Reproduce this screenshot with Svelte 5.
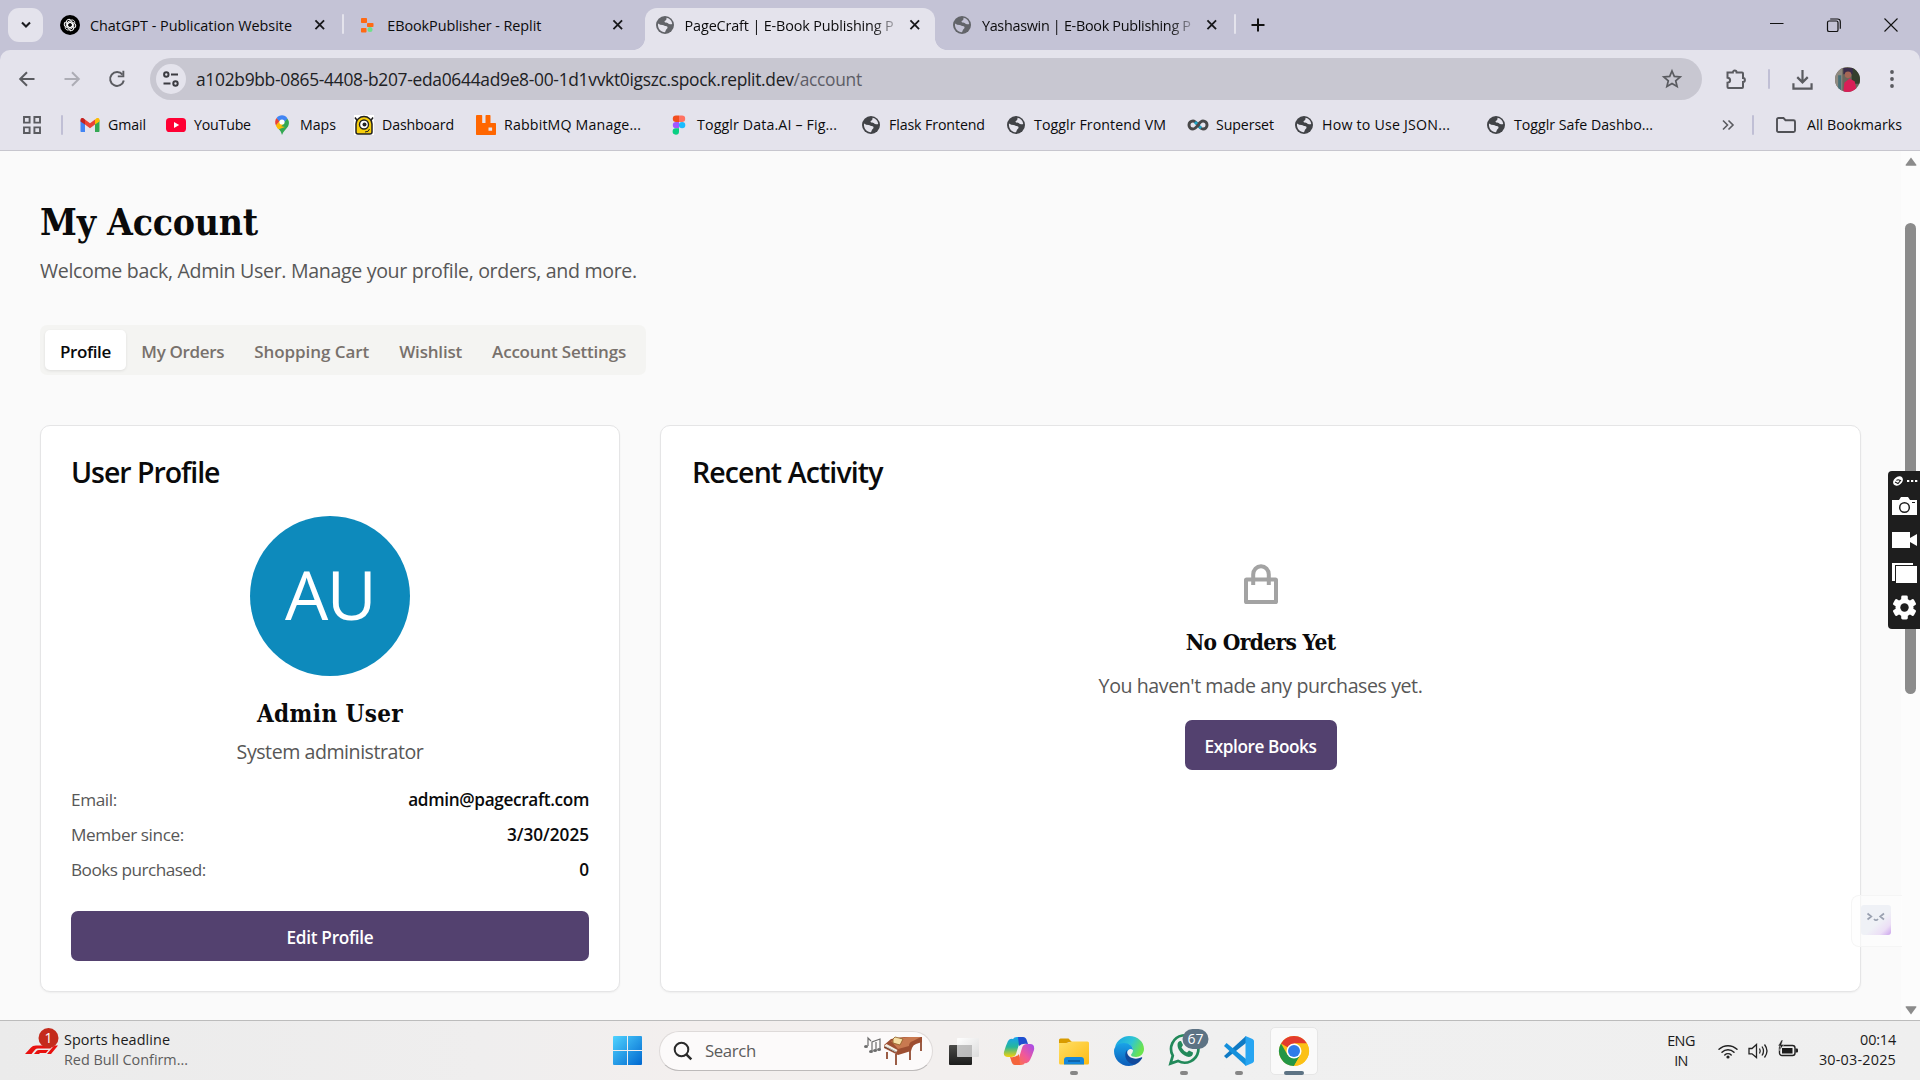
<script>
  // Tightens or loosens the tracking of a label so that it fills the given width.
  function fit(node, width) {
    const natural = node.getBoundingClientRect().width;
    const count = [...node.textContent].length;
    if (natural > 0 && count > 1) {
      node.style.letterSpacing = `${((width - natural) / (count - 0.5)).toFixed(3)}px`;
    }
  }

  const tabs = [
    { icon: 'gpt', title: 'ChatGPT - Publication Website', w: 202, sep: true },
    { icon: 'replit', title: 'EBookPublisher - Replit', w: 154 },
    { icon: 'globe', title: 'PageCraft | E-Book Publishing P', w: 209, active: true, fade: true },
    { icon: 'globe', title: 'Yashaswin | E-Book Publishing P', w: 209, fade: true, sep: true },
  ];

  const bookmarks = [
    { icon: 'gmail', label: 'Gmail', w: 38 },
    { icon: 'youtube', label: 'YouTube', w: 57 },
    { icon: 'maps', label: 'Maps', w: 36 },
    { icon: 'dash', label: 'Dashboard', w: 72 },
    { icon: 'rabbit', label: 'RabbitMQ Manage...', w: 137 },
    { icon: 'figma', label: 'Togglr Data.AI – Fig...', w: 140 },
    { icon: 'globe', label: 'Flask Frontend', w: 96 },
    { icon: 'globe', label: 'Togglr Frontend VM', w: 132 },
    { icon: 'superset', label: 'Superset', w: 58 },
    { icon: 'globe', label: 'How to Use JSON...', w: 128 },
    { icon: 'globe', label: 'Togglr Safe Dashbo...', w: 139 },
  ];

  const sections = [
    { label: 'Profile', w: 51, active: true },
    { label: 'My Orders', w: 83 },
    { label: 'Shopping Cart', w: 115 },
    { label: 'Wishlist', w: 63 },
    { label: 'Account Settings', w: 134 },
  ];

  const details = [
    { label: 'Email:', lw: 46, value: 'admin@pagecraft.com', vw: 181 },
    { label: 'Member since:', lw: 113, value: '3/30/2025', vw: 82 },
    { label: 'Books purchased:', lw: 135, value: '0', vw: 9 },
  ];
</script>

{#snippet icon(name)}
  {#if name === 'gpt'}
    <svg class="i20" viewBox="0 0 20 20"><circle cx="10" cy="10" r="10" fill="#000" /><g fill="none" stroke="#fff" stroke-width="1">{#each [0, 60, 120, 180, 240, 300] as a}<path transform="rotate({a} 10 10)" d="M10 7.2 12.4 8.6V12.9L9.2 14.7A2.7 2.7 0 0 1 5.2 12.2" />{/each}</g></svg>
  {:else if name === 'replit'}
    <svg class="i20" viewBox="0 0 20 20"><rect x="4" y="3" width="6" height="5" rx=".8" fill="#ff6a13" /><rect x="10" y="8" width="6.5" height="4" rx=".8" fill="#ff6a13" /><rect x="4" y="13" width="5.500" height="4.500" rx=".8" fill="#ff6a13" /><circle cx="13" cy="14.500" r="2.500" fill="#6fe08a" /></svg>
  {:else if name === 'globe'}
    <svg class="i20" viewBox="0 0 20 20"><circle cx="10" cy="10" r="9" fill="currentColor" /><path class="land" d="M11.500 2.800C14.800 3.500 17 6 17.200 9c-1 .5-2.200.3-3 .1-.8-.2-.9-1-1.600-1.200-1-.3-1.800 0-2.700-.6-.8-.7-.2-1.700.7-1.900.8-.2.9-1.200.9-2.600ZM3 8.500c1.500 1 3 1.500 4.500 1.500 1.500.1 2 1 3.200 1.100 1.200.2 2 .6 1.800 1.600-.2 1.200-1.300 1.400-1.700 2.500-.2.700-.4 1.400-.9 2C5.900 17 2.400 13.600 3 8.500Z" /></svg>
  {:else if name === 'gmail'}
    <svg class="i20" viewBox="0 0 20 20"><path d="M.5 5v11c0 .6.4 1 1 1h3.500V8Z" fill="#4285f4" /><path d="M15 8v9h3.500c.6 0 1-.4 1-1V5Z" fill="#34a853" /><path d="M5 4.500 10 8.300l5-3.800v5L10 13.300 5 9.500Z" fill="#ea4335" /><path d="M.5 5c0-2 2-2.500 3.300-1.500L5 4.500v5L.5 6.500Z" fill="#c5221f" /><path d="M19.500 5c0-2-2-2.500-3.300-1.500L15 4.500v5l4.500-3Z" fill="#fbbc04" /></svg>
  {:else if name === 'youtube'}
    <svg class="i20" viewBox="0 0 20 20"><rect y="3" width="20" height="14" rx="3.600" fill="#ff0033" /><path d="m8 7 5.200 3L8 13Z" fill="#fff" /></svg>
  {:else if name === 'maps'}
    <svg class="i20" viewBox="0 0 20 20"><path d="M10 20c-.8-3-2-4.300-3.600-6.400L14.800 3.600C17 5 17.800 8.500 16 11.500c-2 3.200-4.700 4.500-6 8.500Z" fill="#34a853" /><path d="M3.800 10 13 12 6.800 14.200C5.500 12.800 4.300 11.500 3.800 10Z" fill="#fbbc04" /><path d="M4.600 3 8 6l-4 4.600C2.600 8 3 4.800 4.600 3Z" fill="#ea4335" /><path d="M4.600 3C7-.5 13-1 15.500 3.600L10.500 9 7 6Z" fill="#4285f4" /><path d="m4 10.600 5-6 2 5-4.800 4.600Z" fill="#fbbc04" /><circle cx="10" cy="7" r="2.600" fill="#fff" /></svg>
  {:else if name === 'dash'}
    <svg class="i20" viewBox="0 0 20 20"><path fill="#fff" d="M0 0h20v20H0z" /><path d="M1 2.500 3.500 6M19 2.500 16.500 6" stroke="#222" stroke-width="1.500" /><path d="M2 17V9a8 7.500 0 0 1 16 0v8q0 2-2 2H4q-2 0-2-2Z" fill="#f8cf0d" stroke="#222" stroke-width="1.500" /><circle cx="10" cy="9.500" r="4.500" fill="#fff" stroke="#222" stroke-width="1.400" /><circle cx="10.500" cy="9.500" r="2" fill="#222" /><path d="M11 17q4 0 4.500-3" fill="none" stroke="#222" /></svg>
  {:else if name === 'rabbit'}
    <svg class="i20" viewBox="0 0 20 20"><path d="M1 0h4.500q.7 0 .7.700V8h3.300V.7q0-.7.700-.7h3.600q.7 0 .7.700V8H19.300q.7 0 .7.700V19.300q0 .7-.7.700H.7q-.7 0-.7-.7V.7Q0 0 1 0ZM12.500 12.500v3.300h3.600v-3.300Z" fill="#f60" fill-rule="evenodd" /></svg>
  {:else if name === 'figma'}
    <svg class="i20" viewBox="0 0 20 20"><path d="M10 .5H7a3.200 3.200 0 0 0 0 6.400h3Z" fill="#f24e1e" /><path d="M10 .5h3a3.200 3.200 0 0 1 0 6.400h-3Z" fill="#ff7262" /><path d="M10 6.900H7a3.200 3.200 0 0 0 0 6.400h3Z" fill="#a259ff" /><circle cx="13.100" cy="10.100" r="3.200" fill="#1abcfe" /><path d="M10 13.300H7a3.200 3.200 0 1 0 3 3.200Z" fill="#0acf83" /></svg>
  {:else if name === 'superset'}
    <svg class="i20" viewBox="0 0 20 20"><path d="M10 10C8 7.200 6.500 6 5 6a4 4 0 0 0 0 8c1.500 0 3-1.200 5-4s3.500-4 5-4a4 4 0 0 1 0 8c-1.500 0-3-1.200-5-4Z" fill="none" stroke="#484848" stroke-width="3" /><path d="m7 7 2 2M11.200 11.500l1.900 1.700" stroke="#20a7c9" stroke-width="3" /></svg>
  {/if}
{/snippet}

<div class="screen">
  <header class="strip">
    <button class="tabsearch" aria-label="Search tabs"><svg width="12" height="8" viewBox="0 0 12 8"><path d="m2 1.500 4 4 4-4" fill="none" stroke="#1b1b1f" stroke-width="2.100" /></svg></button>
    {#each tabs as tab}
      <div class="tab" class:active={tab.active}>
        <span class="fav">{@render icon(tab.icon)}</span>
        <span class="title" class:fade={tab.fade}><span use:fit={tab.w}>{tab.title}</span></span>
        <svg class="close" viewBox="0 0 12 12"><path d="m1.500 1.500 9 9m0-9-9 9" stroke="#17171a" stroke-width="1.900" /></svg>
        {#if tab.sep}<i class="tabsep"></i>{/if}
      </div>
    {/each}
    <svg class="plus" viewBox="0 0 14 14"><path d="M7 .5v13M.5 7h13" stroke="#111" stroke-width="2" /></svg>
    <div class="winbtns">
      <svg viewBox="0 0 14 14"><path d="M0 5.500h13.500" stroke="#111" /></svg>
      <svg viewBox="0 0 14 14"><rect x=".5" y="3" width="10.500" height="10.500" rx="1.600" fill="none" stroke="#111" stroke-width="1.200" /><path d="M3.200 1h7.300q2.800 0 2.800 2.800v7" fill="none" stroke="#111" stroke-width="1.200" /></svg>
      <svg viewBox="0 0 14 14"><path d="m.5.5 13 13m0-13-13 13" stroke="#111" stroke-width="1.100" /></svg>
    </div>
  </header>

  <div class="chrome">
    <div class="toolbar">
      <svg class="nav" viewBox="0 0 20 20"><path d="M17.500 10H3.500M10 3.200 3.200 10 10 16.800" fill="none" stroke="#5a5b60" stroke-width="2" /></svg>
      <svg class="nav" viewBox="0 0 20 20"><path d="M2.500 10h14M10 3.200 16.800 10 10 16.800" fill="none" stroke="#adadb5" stroke-width="2" /></svg>
      <svg class="nav" viewBox="0 0 20 20"><path d="M15.500 5.700A6.900 6.900 0 1 0 16.800 11.500" fill="none" stroke="#5a5b60" stroke-width="2" /><path d="M17.300 1.800v6.500h-6.500V6.400h4.600V1.800Z" fill="#5a5b60" /></svg>
      <div class="omnibox">
        <span class="site"><svg width="18" height="18" viewBox="0 0 18 18"><g fill="none" stroke="#3b3b41" stroke-width="2"><circle cx="4.300" cy="4.500" r="2.200" /><path d="M9 4.500h7M1.500 13.500h7" /><circle cx="13.500" cy="13.500" r="2.200" /></g></svg></span>
        <span class="url"><span use:fit={666}>a102b9bb-0865-4408-b207-eda0644ad9e8-00-1d1vvkt0igszc.spock.replit.dev<em>/account</em></span></span>
        <svg class="star" viewBox="0 0 20 20"><path d="m10 2 2.300 5.400 5.900.5-4.500 3.900 1.400 5.700L10 14.500l-5.100 3 1.400-5.700L1.800 7.900l5.900-.5Z" fill="none" stroke="#5a5b60" stroke-width="1.700" /></svg>
      </div>
      <svg class="puzzle" viewBox="0 0 22 22"><path d="M2.500 4.500h5.300a1.900 1.900 0 0 1 3.800 0H17q1 0 1 1v4.600a1.900 1.900 0 0 1 0 3.800V19q0 1-1 1H3.500q-1 0-1-1v-4.300c3.500-.4 3.500-4.600 0-5Z" fill="none" stroke="#5a5b60" stroke-width="2" /></svg>
      <i class="vsep"></i>
      <svg class="download" viewBox="0 0 22 22"><path d="M11 1v12.500M5.500 8.500 11 14l5.500-5.500M1.500 15v5.500h19V15" fill="none" stroke="#5a5b60" stroke-width="2.300" /></svg>
      <svg class="me" viewBox="0 0 24 24"><clipPath id="mc"><circle cx="12" cy="12" r="12" /></clipPath><g clip-path="url(#mc)"><path fill="#6b665c" d="M0 0h24v24H0z" /><path d="M0 0h7v24H0z" fill="#8f8a80" /><path d="M3 8h3v16H3z" fill="#477078" /><path d="M16 0h8v16h-8z" fill="#35402c" /><path d="M8 1h9v6H8z" fill="#3a2d4a" /><circle cx="12.500" cy="7.500" r="3.200" fill="#a56756" /><path d="m8 24 1-9 5-4 5 3 2 10Z" fill="#d91f57" /></g></svg>
      <svg class="dots" viewBox="0 0 6 20"><g fill="#5a5b60"><circle cx="3" cy="3" r="1.900" /><circle cx="3" cy="10" r="1.900" /><circle cx="3" cy="17" r="1.900" /></g></svg>
    </div>
    <nav class="bookmarks">
      <svg class="apps" viewBox="0 0 18 18"><g fill="none" stroke="#5a5b60" stroke-width="1.900"><path d="M1 1h5.600v5.600H1zM11.400 1H17v5.600h-5.600zM1 11.400h5.600V17H1zM11.400 11.400H17V17h-5.600z" /></g></svg>
      <i class="vsep"></i>
      {#each bookmarks as b}
        <span class="bm">{@render icon(b.icon)}<span class="lbl"><span use:fit={b.w}>{b.label}</span></span></span>
      {/each}
      <svg class="more" viewBox="0 0 12 12"><path d="m1 1.500 4.500 4.500L1 10.500M6.500 1.500 11 6l-4.500 4.500" fill="none" stroke="#5a5b60" stroke-width="1.600" /></svg>
      <i class="vsep"></i>
      <svg class="folder" viewBox="0 0 20 16"><path d="M1 13.500v-11Q1 1 2.500 1H7.500l2 2.200h8Q19 3.200 19 4.700v8.800q0 1.500-1.500 1.500h-15Q1 15 1 13.500Z" fill="none" stroke="#505156" stroke-width="1.900" /></svg>
      <span class="lbl"><span use:fit={95}>All Bookmarks</span></span>
    </nav>
  </div>

  <main class="page">
    <div class="content">
      <h1><span use:fit={218}>My Account</span></h1>
      <p class="welcome"><span use:fit={597}>Welcome back, Admin User. Manage your profile, orders, and more.</span></p>
      <div class="sections">
        {#each sections as s}
          <button class="section" class:on={s.active}><span use:fit={s.w}>{s.label}</span></button>
        {/each}
      </div>
      <div class="cards">
        <section class="card">
          <h2><span use:fit={149}>User Profile</span></h2>
          <div class="avatar"><span use:fit={91}>AU</span></div>
          <h3 class="name"><span use:fit={146}>Admin User</span></h3>
          <p class="role"><span use:fit={187}>System administrator</span></p>
          <dl>
            {#each details as d}
              <div class="row"><dt><span use:fit={d.lw}>{d.label}</span></dt><dd><span use:fit={d.vw}>{d.value}</span></dd></div>
            {/each}
          </dl>
          <button class="primary edit"><span use:fit={87}>Edit Profile</span></button>
        </section>
        <section class="card wide">
          <h2><span use:fit={191}>Recent Activity</span></h2>
          <div class="empty">
            <svg class="bag" viewBox="0 0 34 40"><g fill="none" stroke="#a3a3a3" stroke-width="4"><rect x="2" y="15.500" width="30" height="22.500" rx=".6" /><path d="M9.200 21V10.500a7.800 8.300 0 0 1 15.600 0V21" /></g></svg>
            <h3><span use:fit={150}>No Orders Yet</span></h3>
            <p><span use:fit={324}>You haven't made any purchases yet.</span></p>
            <button class="primary"><span use:fit={112}>Explore Books</span></button>
          </div>
        </section>
      </div>
    </div>

    <aside class="scroll">
      <svg class="arrow" viewBox="0 0 12 9"><path d="M6 .5 11.500 8q0 .8-.8.800H1.300Q.5 8.800.5 8Z" fill="#8b8b8b" /></svg>
      <i class="thumb"></i>
      <svg class="arrow down" viewBox="0 0 12 9"><path d="M6 .5 11.500 8q0 .8-.8.800H1.300Q.5 8.800.5 8Z" fill="#8b8b8b" /></svg>
    </aside>

    <div class="assistant">
      <svg width="30" height="30" viewBox="0 0 30 30"><defs><linearGradient id="ag" x1=".25" y1=".2" x2="1" y2="1"><stop offset=".45" stop-color="#eff1f6" /><stop offset=".75" stop-color="#ecdff6" /><stop offset="1" stop-color="#cba3ec" /></linearGradient></defs><rect width="30" height="30" rx="3" fill="url(#ag)" /><path d="m6.500 8.500 3.800 3-3.800 3M23 8.500l-3.800 3 3.800 3M13 14q2 2.400 4 0" fill="none" stroke="#9aa1b0" stroke-width="1.700" /></svg>
    </div>
    <div class="recorder">
      <svg width="32" height="158" viewBox="0 0 32 158"><g fill="#fff"><ellipse cx="10" cy="10" rx="5.500" ry="4" transform="rotate(-40 10 10)" /><rect x="19" y="9" width="2.300" height="2" /><rect x="23" y="9" width="2.300" height="2" /><rect x="27" y="9" width="2.300" height="2" /><path d="M4 29h7l2-3h7l2 3h7v15H4zM4 61h18v6l7-4v12l-7-4v6H4z" /><path d="M4 92h21v2H7v16H4z" /><rect x="8" y="95" width="21" height="17" /></g><circle cx="16.500" cy="36.500" r="4.800" fill="#fff" stroke="#1e1e1e" stroke-width="1.500" /><path d="M24 31.500h3" stroke="#1e1e1e" /><path d="m7 11 3 1.500 3-3.500M8.500 9.500q1.500-1.500 3.500 0" fill="none" stroke="#1e1e1e" stroke-width="1.100" /><g fill="#fff"><circle cx="16.500" cy="136.500" r="9" />{#each [0, 60, 120, 180, 240, 300] as a}<rect x="13.200" y="124.500" width="6.600" height="6" rx="1.400" transform="rotate({a} 16.500 136.500)" />{/each}</g><circle cx="16.500" cy="136.500" r="4.200" fill="#1e1e1e" /></svg>
    </div>
  </main>

  <footer class="taskbar">
    <svg class="f1" viewBox="0 0 36 30"><path d="M0 28 6 21.500Q7.500 19.500 11 19.500H28l-2.500 3H13q-2 0-3 1.200L6.500 28ZM9 28l2.500-3q.8-1 2.500-1h9.500l-2.500 3h-6l-1 1ZM22 28l7-8.500h4L26 28Z" fill="#e8110f" /><circle cx="23.500" cy="12" r="10" fill="#c42b1c" /><text x="23.500" y="17" text-anchor="middle" font-size="14" fill="#fff">1</text></svg>
    <div class="news"><span use:fit={106}>Sports headline</span><span class="dim" use:fit={124}>Red Bull Confirm...</span></div>

    <svg class="start" viewBox="0 0 29 29"><defs><linearGradient id="wg" x1="0" y1="0" x2="1" y2="1"><stop stop-color="#50d3ff" /><stop offset="1" stop-color="#0067cf" /></linearGradient></defs><path d="M1 0h13v14H0V1q0-1 1-1ZM15 0h13q1 0 1 1v13H15ZM0 15h14v14H1q-1 0-1-1ZM15 15h14v13q0 1-1 1H15Z" fill="url(#wg)" /></svg>
    <div class="search">
      <svg width="20" height="20" viewBox="0 0 20 20"><circle cx="8.500" cy="8.500" r="6.800" fill="none" stroke="#2a2a2a" stroke-width="2" /><path d="m13.300 13.300 5 5" stroke="#2a2a2a" stroke-width="2.500" /></svg>
      <span class="q"><span use:fit={51}>Search</span></span>
      <svg class="piano" viewBox="0 0 58 30"><g fill="none" stroke="#6d6d6d" stroke-width="1.200"><path d="M4 10V2l3 3M8 15V6l8-3v11M12 15V6" /></g><g fill="#6d6d6d"><ellipse cx="2" cy="10.500" rx="2" ry="1.600" /><ellipse cx="7" cy="15.500" rx="2" ry="1.600" /><ellipse cx="11" cy="14.500" rx="2" ry="1.600" /><ellipse cx="15" cy="13.500" rx="2" ry="1.600" /></g><path d="M23 16v7M32 18v11M46 14v10M57 4v11" stroke="#8a4126" stroke-width="1.700" /><path d="m20 9 7-6 13-2h18v5l-6 2q-3 1-4 4l-1 3-13 4-14-7Z" fill="#9d4e31" /><path d="m27 5 6-3 13-1h11l-8 4q-4 1-4 5l-11 3Z" fill="#c87950" /><path d="m20 10 2.500-2 11 6-1.500 2.500Z" fill="#f4eee4" /><path d="m21.500 11 10.500 5" stroke="#333" stroke-width="1.200" stroke-dasharray="1 1.200" /><path d="m29 3 2-2 8 2-3 6-7-2Z" fill="#f6dfa8" stroke="#8b5a20" stroke-width=".8" /></svg>
    </div>
    <div class="pinned">
      <svg viewBox="0 0 30 30"><defs><linearGradient id="tv" x1="0" y1="0" x2="0" y2="1"><stop stop-color="#4b4b49" /><stop offset="1" stop-color="#1c1c1b" /></linearGradient><linearGradient id="tw" x1="0" y1="0" x2="1" y2="1"><stop stop-color="#fff" /><stop offset="1" stop-color="#dcdcdc" /></linearGradient></defs><rect y="9" width="23" height="20" rx="1" fill="url(#tv)" /><rect x="8" y="2" width="22" height="19" rx="1" fill="url(#tw)" /><path d="M8 9h15v12H8z" fill="#a5a5a5" opacity=".65" /></svg>
      <svg viewBox="0 0 30 30"><defs><linearGradient id="ca" x1="0" y1="0" x2="0" y2="1"><stop stop-color="#16a1f1" /><stop offset=".5" stop-color="#27b79a" /><stop offset="1" stop-color="#f7d20a" /></linearGradient><linearGradient id="cb" x1="1" y1="0" x2="0" y2="1"><stop stop-color="#a04bf0" /><stop offset=".5" stop-color="#f0589b" /><stop offset="1" stop-color="#ff7a2e" /></linearGradient></defs><path d="M9 3q1-2 4-2h7q-3 0-4 4l-4 13q-1 3-5 3H4q-5 0-4-5Q2 9 4 5q2-3 5-2Z" fill="url(#ca)" /><path d="M14 1h5q3 0 4 4l1 3q-6-1-9 2Z" fill="#1f4fd0" /><path d="M21 27q-1 2-4 2h-7q3 0 4-4l4-13q1-4 5-4h3q5 0 4 6-2 6-4 10-2 4-5 3Z" fill="url(#cb)" /><path d="M16 29h-5q-3 0-4-5l-1-3q6 1 9-3Z" fill="#f4643b" /></svg>
      <svg viewBox="0 0 30 30"><defs><linearGradient id="fg" x1="0" y1="0" x2="1" y2="1"><stop stop-color="#ffdf66" /><stop offset="1" stop-color="#fdbb13" /></linearGradient></defs><path d="M0 4q0-1.500 1.500-1.500h8L13 6h-2L0 9Z" fill="#d89b00" /><path d="M0 7h9l3-1.500h16.500Q30 5.500 30 7v20q0 1.500-1.500 1.500h-27Q0 28.500 0 27Z" fill="url(#fg)" /><path d="M5 28.500V24q0-3 3-3h14q3 0 3 3v4.500Z" fill="#1487dc" /><path d="M9 25h12" stroke="#0b5a9d" stroke-width="1.500" /></svg>
      <svg viewBox="0 0 30 30"><defs><linearGradient id="ea" x1="0" y1="0" x2="1" y2=".4"><stop offset=".1" stop-color="#1aa7e4" /><stop offset=".6" stop-color="#2fc5d4" /><stop offset="1" stop-color="#6be34f" /></linearGradient><linearGradient id="eb" x1="0" y1="0" x2="0" y2="1"><stop stop-color="#1aa3e8" /><stop offset="1" stop-color="#0b5cb9" /></linearGradient></defs><path d="M1 11C3 4 9 0 15 0c9 0 15 6 15 13 0 5-4 8-8 8-3 0-5-1-5-2s2-2 2-5c0-3-3-6-7-6-5 0-9 2-11 3Z" fill="url(#ea)" /><path d="M0 15c0-5 5-8 10-8 5 0 9 3 9 7-2-2-6-1-6 4 0 5 4 10 9 10-2 1-5 2-7 2C6 30 0 23 0 15Z" fill="url(#eb)" /><path d="M13 14c-4 5-1 14 8 14.500 3-1 5-3 7-6 .5-1 0-1.500-1-1-6 3-15 0-14-7.500Z" fill="#114a9c" /></svg>
      <svg class="wa" viewBox="0 0 40 38"><path d="m1.500 36.500 2.300-7.800A13.700 13.700 0 1 1 9 33.900Z" fill="none" stroke="#22895a" stroke-width="2.700" transform="translate(0 -1)" /><path d="M8.500 17c0-3 2-4.500 3.500-4l2 4-1.500 2.500q2 3.500 5.500 5l2-2 4 2q0 4-4 4.500C14 28.500 8.500 22 8.500 17Z" fill="#22895a" /><rect x="13.500" y="1" width="26" height="20" rx="10" fill="#5d7384" /><text x="26.500" y="16" text-anchor="middle" font-size="14" fill="#fff">67</text></svg>
      <svg viewBox="0 0 30 30"><path d="m0 20 2.500 2.500L22 7V0Z" fill="#0f7ac4" /><path d="m0 10 2.500-3L22 23v7Z" fill="#1490dc" /><path d="m21.500 0 7 3q1.500.8 1.500 2v20q0 1.200-1.500 2l-7 3Z" fill="#27a5f2" /></svg>
      <span class="tile"><svg viewBox="0 0 30 30"><circle cx="15" cy="15" r="15" fill="#fbc116" /><path d="M15 15 2 7.500A15 15 0 0 1 28 7.500H15Z" fill="#e33b2e" /><path d="M2 7.500A15 15 0 0 0 15 30l6.500-11.300L8.500 18.700Z" fill="#239645" /><path d="M15 7.500H28A15 15 0 0 1 15 30l6.500-11.300Z" fill="#fbc116" /><circle cx="15" cy="15" r="7.500" fill="#fff" /><circle cx="15" cy="15" r="6" fill="#2f7be8" /></svg></span>
    </div>
    <div class="lang"><span use:fit={28}>ENG</span><span use:fit={14}>IN</span></div>
    <div class="tray">
      <svg viewBox="0 0 20 20"><g fill="none" stroke="#222" stroke-width="1.500" stroke-linecap="round"><path d="M1 8.300a13 13 0 0 1 18 0M4 11.200a8.700 8.700 0 0 1 12 0M6.800 14a4.700 4.700 0 0 1 6.400 0" /></g><circle cx="10" cy="16" r="1.600" fill="#222" /></svg>
      <svg viewBox="0 0 20 20"><path d="M1 7.500h3L8.500 3.500v13L4 12.800H1Zm10.500 0q1.500 2.500 0 5M14 5.500q3 4.500 0 9M16.500 3.500q5 6.500 0 13" fill="none" stroke="#222" stroke-width="1.300" /></svg>
      <svg viewBox="0 0 20 20"><rect x="1.500" y="4.500" width="15.500" height="10" rx="2.500" fill="none" stroke="#222" stroke-width="1.400" /><rect x="4" y="7" width="10.500" height="5.500" fill="#1b1b1b" /><path d="M17.500 7.500H19q1 0 1 1v2q0 1-1 1h-1.500Z" fill="#222" /><path d="M3.500-1 0 5h2.500L1.500 9.500 6 3.500H3.500L5-1Z" fill="#222" stroke="#efefef" stroke-width=".5" /></svg>
    </div>
    <div class="clock"><span use:fit={36}>00:14</span><span use:fit={77}>30-03-2025</span></div>
  </footer>
</div>

<style>
  :global(body) { margin: 0; overflow: hidden; }
  .screen { width: 1920px; height: 1080px; display: flex; flex-direction: column; overflow: hidden; font-family: 'Open Sans', 'Noto Sans', sans-serif; color: #0b0b0c; background: #c4c3d6; }
  button { border: 0; padding: 0; background: none; font: inherit; color: inherit; }
  h1 span, h2 span, h3 span, p span, dt span, dd span, button span { display: inline-block; white-space: nowrap; }
  h1, h2, h3, p, dl, dt, dd { margin: 0; font-weight: inherit; }
  svg { display: block; flex: none; overflow: visible; }
  .i20 { width: 20px; height: 20px; }

  .strip { height: 50px; flex: none; display: flex; align-items: center; padding-left: 8px; background: #c4c3d6; }
  .tabsearch { width: 35px; height: 34px; margin-right: 5px; border-radius: 11px; background: #e4e3ec; display: grid; place-items: center; }
  .tab { position: relative; width: 297.300px; height: 50px; box-sizing: border-box; padding: 0 18.500px 0 12px; display: flex; align-items: center; color: #0b0b0c; isolation: isolate; }
  .fav { color: #626469; --land: #c4c3d6; }
  .land { fill: var(--land); }
  .title { flex: 1; min-width: 0; margin: 1px 12px 0 10px; white-space: nowrap; font-size: 14.400px; line-height: 24px; }
  .title span, .lbl span, .url > span, .q span { display: inline-block; }
  .fade { -webkit-mask-image: linear-gradient(90deg, #000 88%, transparent 103%); mask-image: linear-gradient(90deg, #000 88%, transparent 103%); }
  .close { width: 11.500px; height: 11.500px; }
  .tab .close { margin-right: 1px; }
  .tabsep { position: absolute; right: 1px; top: 14px; width: 2px; height: 20px; background: #e4e3ec; border-radius: 1px; }
  .active .fav { --land: #e4e3ec; }
  .active::before { content: ''; position: absolute; z-index: -1; left: 2px; right: 5px; top: 8px; bottom: 0; background: #e4e3ec; border-radius: 12px 12px 0 0; }
  .active::after { content: ''; position: absolute; z-index: -1; left: -10px; right: -7px; bottom: 0; height: 12px; background: radial-gradient(circle at 0 0, transparent 11.600px, #e4e3ec 12.200px) left / 12px 12px no-repeat, radial-gradient(circle at 100% 0, transparent 11.600px, #e4e3ec 12.200px) right / 12px 12px no-repeat; }
  .plus { width: 14px; height: 14px; margin-left: 14px; }
  .winbtns { margin-left: auto; margin-right: 22px; display: flex; gap: 43px; }
  .winbtns svg { width: 14px; height: 14px; }

  .chrome { height: 100px; flex: none; background: #e4e3ec; border-bottom: 1px solid #c7c6ce; border-radius: 10px 10px 0 0; }
  .toolbar { height: 58px; display: flex; align-items: center; padding-left: 17px; }
  .nav { width: 20px; height: 20px; margin-right: 25px; }
  .nav + .omnibox { margin-left: -2px; }
  .omnibox { width: 1552px; height: 42px; border-radius: 21px; background: #c8c7d1; display: flex; align-items: center; box-sizing: border-box; padding: 0 20px 0 6px; }
  .site { width: 30px; height: 30px; border-radius: 50%; background: #e4e3ec; display: grid; place-items: center; }
  .url { flex: 1; margin: 0 0 0 10px; font-size: 17.400px; line-height: 30px; white-space: nowrap; color: #202124; }
  .url em { font-style: normal; color: #5d5d66; }
  .star { width: 20px; height: 20px; }
  .puzzle { width: 22px; height: 22px; margin-left: 23px; }
  .toolbar .vsep { margin-left: 21px; }
  .vsep { width: 2px; height: 20px; background: #c0bfd5; border-radius: 1px; flex: none; }
  .download { width: 21px; height: 21px; margin-left: 22px; }
  .me { width: 25px; height: 25px; margin-left: 22px; }
  .dots { width: 6px; height: 20px; margin-left: 29px; }
  .bookmarks { height: 34px; display: grid; align-items: center; grid-template-columns: 38px 19px 86px 106px 82px 122px 193px 192px 145px 182px 106px 192px 236px 30px 24px 30px 100px; padding-left: 23px; color: #414347; --land: #e4e3ec; }
  .bm { display: flex; align-items: center; }
  .lbl { font-size: 14.200px; line-height: 22px; white-space: nowrap; color: #0b0b0c; }
  .bm .lbl { margin-left: 8px; }
  .apps { width: 18px; height: 18px; }
  .more { width: 12px; height: 12px; }
  .folder { width: 20px; height: 16px; }
  .folder + .lbl { padding-left: 1px; }

  .page { position: relative; height: 869px; flex: none; display: flex; background: #fafafa; color: #0a0a0b; }
  .content { width: 1821px; padding: 44px 40px 0; }
  h1 { height: 60px; font: bold 37px/54px 'DejaVu Serif Condensed', 'DejaVu Serif', serif; font-stretch: condensed; }
  .welcome { margin-top: 2px; font-size: 19.600px; line-height: 28px; color: #575757; }
  .sections { width: 606px; height: 50px; margin-top: 40px; box-sizing: border-box; padding: 5px; display: flex; background: #f4f4f2; border-radius: 7px; }
  .section { padding: 0 15px; height: 40px; line-height: 44px; border-radius: 5px; font-size: 17px; font-weight: 600; text-align: left; white-space: nowrap; color: #78716c; }
  .section span, .primary span { font-weight: 580; }
  .section.on { width: 82px; background: #fff; color: #0a0a0b; box-shadow: 0 1px 3px rgba(0, 0, 0, .09); }
  .cards { margin-top: 50px; display: grid; grid-template-columns: 580px 1201px; gap: 40px; }
  .card { height: 567px; box-sizing: border-box; padding: 26px 30px; border: 1px solid #e5e5e6; border-radius: 10px; background: #fff; box-shadow: 0 1px 2px rgba(0, 0, 0, .05); text-align: center; }
  h2 { height: 64px; font-size: 28.500px; font-weight: 580; line-height: 41px; text-align: left; }
  .wide h2 { padding-left: 1px; }
  .avatar { width: 160px; height: 160px; margin: 0 auto; border-radius: 50%; background: #0d8abc; color: #fff; font: 430 68.500px/155px 'Open Sans', sans-serif; }
  h3 { font: bold 24px/36px 'DejaVu Serif Condensed', 'DejaVu Serif', serif; font-stretch: condensed; }
  .name { margin-top: 19px; line-height: 37px; }
  .role { margin-top: 5px; font-size: 19.600px; line-height: 30px; color: #575757; }
  dl { margin-top: 15px; }
  .row { height: 35px; display: flex; justify-content: space-between; line-height: 35px; font-size: 17.200px; }
  dt { color: #575757; }
  dd { font-weight: 580; color: #0a0a0b; }
  .primary { display: block; height: 50px; line-height: 53px; border-radius: 7px; background: #53416f; color: #fff; font-size: 17.200px; }
  .edit { width: 100%; margin-top: 24px; }
  .empty { display: flex; flex-direction: column; align-items: center; padding-top: 48px; }
  .bag { width: 34px; height: 40px; }
  .empty h3 { margin-top: 20px; font-size: 22.500px; }
  .empty p { margin-top: 12px; font-size: 19.600px; line-height: 28px; color: #575757; }
  .empty .primary { width: 152px; margin-top: 20px; }

  .scroll { width: 19px; display: flex; flex-direction: column; align-items: center; background: #fcfcfc; }
  .arrow { width: 12px; height: 9px; margin-top: 6px; }
  .thumb { width: 11px; height: 471px; margin-top: 57px; border-radius: 6px; background: #8b8b8b; }
  .down { transform: rotate(180deg); margin-top: auto; margin-bottom: 5px; }
  .assistant { position: absolute; left: 1851px; top: 744px; width: 40px; height: 40px; padding: 10px 0 0 10px; border: 1px solid #f5f5f5; border-right: 0; box-sizing: content-box; border-radius: 8px 0 0 8px; background: rgba(253, 253, 253, .6); }
  .assistant svg { margin: -1px; }
  .recorder { position: absolute; left: 1888px; top: 320px; width: 32px; height: 158px; border-radius: 4px 0 0 4px; background: #1e1e1e; }

  .taskbar { height: 60px; box-sizing: border-box; flex: none; border-top: 1px solid #bcbcbc; background: linear-gradient(90deg, #ebebeb, #efeeee 25%, #f3efee 36%, #f2efee 50%, #f0f0f0 62%, #efefef); display: flex; align-items: center; font-size: 14.400px; line-height: 20px; color: #1b1b1b; }
  .taskbar span { white-space: nowrap; }
  .f1 { width: 36px; height: 30px; margin: -19px 0 0 25px; }
  .news { width: 549px; margin: -2px 0 0 3px; display: flex; flex-direction: column; align-items: flex-start; }
  .dim { color: #5d5d5d; }
  .start { width: 29px; height: 29px; }
  .search { width: 274px; height: 40px; margin-left: 17px; box-sizing: border-box; padding: 0 10px 0 13px; display: flex; align-items: center; border: 1px solid #dedad9; border-bottom-color: #bdbaba; border-radius: 20px; background: #fcfafa; }
  .q { margin-left: 12px; flex: 1; font-size: 16.800px; color: #5c5c5c; }
  .piano { width: 58px; height: 30px; }
  .pinned { display: flex; align-items: center; gap: 25px; margin-left: 16px; position: relative; }
  .pinned svg { width: 30px; height: 30px; }
  .pinned .wa { width: 40px; height: 38px; margin: -8px -10px 0 0; }
  .tile { width: 48px; height: 48px; margin-left: -9px; box-sizing: border-box; border: 1px solid #e6e6e6; border-radius: 5px; background: #fafafa; display: grid; place-items: center; }
  .pinned::after { content: ''; position: absolute; left: 121px; bottom: 0; width: 8px; height: 4px; border-radius: 2px; background: #868686; box-shadow: 110px 0 #868686, 165px 0 #868686; }
  .tile::after { content: ''; position: absolute; right: 14px; bottom: 0; width: 20px; height: 4px; border-radius: 2px; background: #5d7384; }
  .lang { width: 28px; margin-left: 349px; display: flex; flex-direction: column; align-items: center; }
  .tray { display: flex; gap: 10px; margin-left: 23px; }
  .tray svg { width: 20px; height: 20px; }
  .clock { width: 98px; margin-top: -2px; display: flex; flex-direction: column; align-items: flex-end; }
</style>
